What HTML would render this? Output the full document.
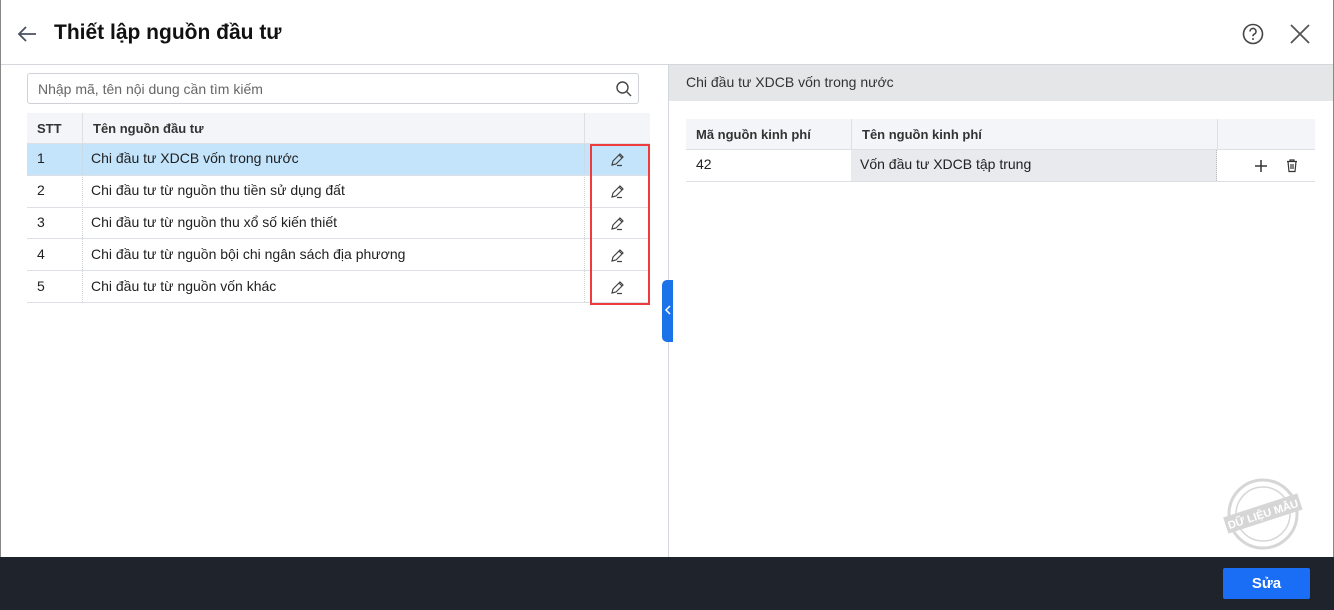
<!DOCTYPE html>
<html><head><meta charset="utf-8"><style>
*{box-sizing:border-box;margin:0;padding:0}
body{width:1334px;height:610px;position:relative;overflow:hidden;background:#fff;font-family:"Liberation Sans",sans-serif;font-size:14px;color:#212121}
.a{position:absolute}
.hd{left:0;top:0;width:1334px;height:65px;border-bottom:1px solid #d4d7dc;border-left:1px solid #888}
.t{left:54px;top:21px;font-size:21px;font-weight:bold;color:#111}
.cell{position:absolute;display:flex;align-items:center;padding-left:10px}
.row{position:absolute;border-bottom:1px solid #dcdfe3}
</style></head><body>
<div class="a hd"></div>
<div class="a" style="left:0;top:0;width:1px;height:610px;background:#888"></div>
<div class="a" style="right:0;top:0;width:1px;height:610px;background:#888"></div>
<svg class="a" style="left:16px;top:24px" width="22" height="20" viewBox="0 0 22 20"><path d="M20 10H3M10 3L3 10l7 7" fill="none" stroke="#4a5060" stroke-width="1.8"/></svg>
<div class="a t">Thiết lập nguồn đầu tư</div>
<svg class="a" style="left:1242px;top:23px" width="22" height="22" viewBox="0 0 22 22"><circle cx="11" cy="11" r="9.5" fill="none" stroke="#444" stroke-width="1.6"/><path d="M8 8.5a3 3 0 1 1 4 2.8c-.8.4-1 1-1 2" fill="none" stroke="#444" stroke-width="1.6"/><circle cx="11" cy="16" r="1" fill="#444"/></svg>
<svg class="a" style="left:1289px;top:23px" width="22" height="22" viewBox="0 0 22 22"><path d="M2 2l18 18M20 2L2 20" stroke="#555" stroke-width="1.8"/></svg>

<div class="a" style="left:668px;top:65px;width:1px;height:492px;background:#d4d7dc"></div>
<div class="a" style="left:27px;top:73px;width:612px;height:31px;border:1px solid #cfd3d8;border-radius:3px;padding:7px 10px;color:#666">Nhập mã, tên nội dung cần tìm kiếm</div>
<svg class="a" style="left:615px;top:80px" width="18" height="18" viewBox="0 0 18 18"><circle cx="7.5" cy="7.5" r="5.5" fill="none" stroke="#444" stroke-width="1.4"/><path d="M11.5 11.5l4.5 4.5" stroke="#444" stroke-width="1.4"/></svg>

<div class="a" style="left:27px;top:113px;width:623px;height:31px;background:#f4f5f8;border-bottom:1px solid #dcdfe3"></div>
<div class="cell" style="left:27px;top:113px;height:30px;font-size:13px;font-weight:bold;color:#333">STT</div>
<div class="cell" style="left:82px;top:113px;height:30px;font-size:13px;font-weight:bold;color:#333;border-left:1px solid #dcdfe3">Tên nguồn đầu tư</div>
<div class="a" style="left:584px;top:113px;width:1px;height:30px;background:#dcdfe3"></div>
<div class="a" style="left:27px;top:144px;width:623px;height:31px;background:#c3e4fb"></div>
<div class="a" style="left:82px;top:144px;width:0;height:158px;border-left:1px dotted #cfd3d8"></div>
<div class="a" style="left:584px;top:144px;width:0;height:158px;border-left:1px dotted #cfd3d8"></div>
<div class="row" style="left:27px;top:143px;width:623px;height:33px"></div>
<div class="row" style="left:27px;top:175px;width:623px;height:33px"></div>
<div class="row" style="left:27px;top:207px;width:623px;height:32px"></div>
<div class="row" style="left:27px;top:238px;width:623px;height:33px"></div>
<div class="row" style="left:27px;top:270px;width:623px;height:33px"></div>
<div class="cell" style="left:27px;top:142px;height:32px">1</div><div class="cell" style="left:81px;top:142px;height:32px">Chi đầu tư XDCB vốn trong nước</div>
<div class="cell" style="left:27px;top:174px;height:32px">2</div><div class="cell" style="left:81px;top:174px;height:32px">Chi đầu tư từ nguồn thu tiền sử dụng đất</div>
<div class="cell" style="left:27px;top:206px;height:32px">3</div><div class="cell" style="left:81px;top:206px;height:32px">Chi đầu tư từ nguồn thu xổ số kiến thiết</div>
<div class="cell" style="left:27px;top:238px;height:32px">4</div><div class="cell" style="left:81px;top:238px;height:32px">Chi đầu tư từ nguồn bội chi ngân sách địa phương</div>
<div class="cell" style="left:27px;top:270px;height:32px">5</div><div class="cell" style="left:81px;top:270px;height:32px">Chi đầu tư từ nguồn vốn khác</div>
<svg class="a" style="left:608px;top:150px" width="20" height="150" viewBox="0 0 20 150">
<g fill="none" stroke="#444" stroke-width="1.2">
<path id="p" d="M4 15l1-4 7-7 3 3-7 7z M11 5l3 3 M9 15.5h5"/>
<use href="#p" y="32"/><use href="#p" y="64"/><use href="#p" y="96"/><use href="#p" y="128"/></g></svg>
<div class="a" style="left:590px;top:144px;width:60px;height:161px;border:2px solid #ee3b3b"></div>
<div class="a" style="left:662px;top:280px;width:11px;height:62px;background:#1a73e8;border-radius:5px 0 0 5px"></div>
<svg class="a" style="left:664px;top:304px" width="8" height="12" viewBox="0 0 8 12"><path d="M6 2L2 6l4 4" fill="none" stroke="#fff" stroke-width="1.5"/></svg>

<div class="a" style="left:669px;top:65px;width:664px;height:36px;background:#e4e6e8;padding:9px 17px;color:#333">Chi đầu tư XDCB vốn trong nước</div>
<div class="a" style="left:686px;top:119px;width:629px;height:31px;background:#f4f5f8;border-bottom:1px solid #dcdfe3"></div>
<div class="cell" style="left:686px;top:119px;height:30px;font-size:13px;font-weight:bold;color:#333">Mã nguồn kinh phí</div>
<div class="cell" style="left:851px;top:119px;height:30px;font-size:13px;font-weight:bold;color:#333;border-left:1px solid #dcdfe3">Tên nguồn kinh phí</div>
<div class="a" style="left:1217px;top:119px;width:1px;height:30px;background:#dcdfe3"></div>
<div class="a" style="left:851px;top:150px;width:366px;height:31px;background:#e9eaee;border-right:1px dotted #bbb"></div>
<div class="row" style="left:686px;top:149px;width:629px;height:33px"></div>
<div class="cell" style="left:686px;top:148px;height:31px">42</div>
<div class="cell" style="left:850px;top:148px;height:31px">Vốn đầu tư XDCB tập trung</div>
<svg class="a" style="left:1254px;top:159px" width="14" height="14" viewBox="0 0 14 14"><path d="M7 1v12M1 7h12" stroke="#333" stroke-width="1.5"/></svg>
<svg class="a" style="left:1285px;top:158px" width="14" height="15" viewBox="0 0 14 15"><path d="M2 3.5h10M5 3.5V2h4v1.5M3 3.5l1 10h6l1-10M6 6v5M8 6v5" fill="none" stroke="#333" stroke-width="1.2"/></svg>

<svg class="a" style="left:1222px;top:476px" width="82" height="76" viewBox="0 0 82 76"><circle cx="41" cy="38" r="34" fill="none" stroke="#d6d6d6" stroke-width="3"/><circle cx="41" cy="38" r="27" fill="none" stroke="#d6d6d6" stroke-width="1.5"/><g transform="rotate(-18 41 38)"><rect x="2" y="29" width="78" height="17" fill="#d6d6d6"/><text x="41" y="42" text-anchor="middle" font-size="11" font-weight="bold" fill="#fff" font-family="Liberation Sans">DỮ LIỆU MẪU</text></g></svg>

<div class="a" style="left:0;top:557px;width:1334px;height:53px;background:#1f232b"></div>
<div class="a" style="left:1223px;top:568px;width:87px;height:31px;background:#1a6ef5;border-radius:2px;color:#fff;font-weight:bold;font-size:15px;text-align:center;line-height:31px">Sửa</div>
</body></html>
